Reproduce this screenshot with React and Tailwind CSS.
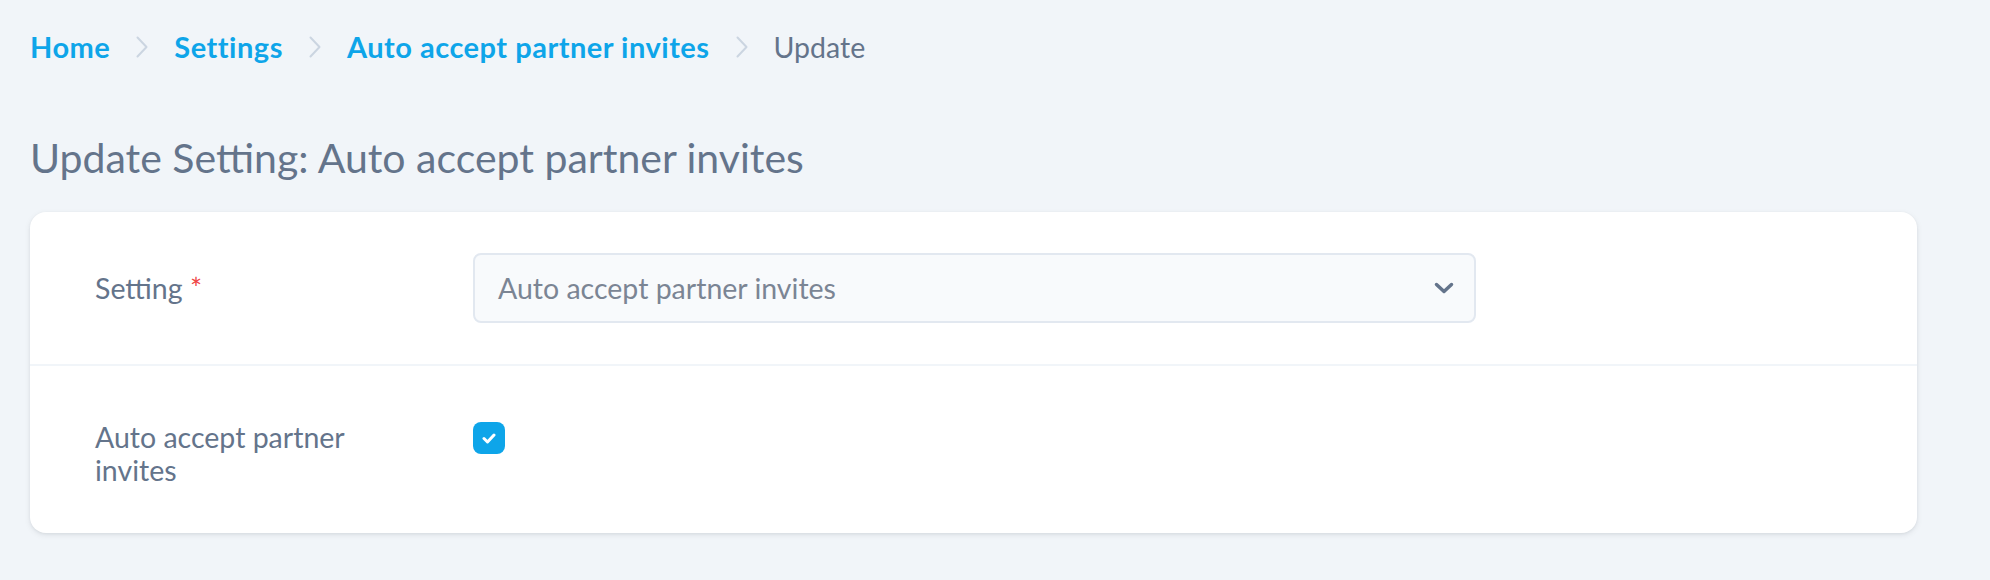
import { useState } from 'react'

const FONT = { fontFamily: 'Lato, "Noto Sans", sans-serif' }

function Chevron() {
  return (
    <svg width="12" height="22" viewBox="0 0 12 22" fill="none" className="mx-[26px] shrink-0">
      <path d="M1.5 1.5 L10.5 11 L1.5 20.5" stroke="#cbd5e1" strokeWidth="2" strokeLinecap="round" strokeLinejoin="round" />
    </svg>
  )
}

export default function App() {
  const [checked, setChecked] = useState(true)

  return (
    <div className="min-h-[580px] bg-[#f1f5f9] px-[30px] pt-[27px]" style={FONT}>
      {/* breadcrumbs */}
      <nav className="flex items-center h-[40px] text-[29px] leading-[40px] font-bold tracking-[0.5px]">
        <a className="text-[#0ea5e9]">Home</a>
        <Chevron />
        <a className="text-[#0ea5e9]">Settings</a>
        <Chevron />
        <a className="text-[#0ea5e9]">Auto accept partner invites</a>
        <Chevron />
        <span className="font-normal tracking-normal text-[28.5px] text-[#64748b]">Update</span>
      </nav>

      <h1 className="mt-[66px] text-[41px] leading-[49px] font-normal text-[#64748b]">
        Update Setting: Auto accept partner invites
      </h1>

      <div className="mt-[30px] w-[1887px] bg-white rounded-2xl shadow-[0_2px_6px_rgba(15,23,42,0.08),0_1px_3px_rgba(15,23,42,0.06)]">
        <div className="flex items-center pl-[65px] pt-[41px] pb-[41px] border-b-2 border-[#f1f5f9]">
          <div className="w-[378px] pr-[80px] text-[28.5px] leading-[33px] text-[#64748b]">
            Setting <span className="text-[#ef4444]">*</span>
          </div>
          <div className="relative w-[1003px] h-[70px] rounded-lg border-2 border-[#e2e8f0] bg-[#f8fafc] flex items-center pl-[23px]">
            <span className="text-[28.5px] text-[#7b8594]">Auto accept partner invites</span>
            <svg width="20" height="12" viewBox="0 0 20 12" fill="none" className="absolute right-[20px] top-[27px]">
              <path d="M2.5 2.5 L10 9.5 L17.5 2.5" stroke="#64748b" strokeWidth="3.5" strokeLinecap="round" strokeLinejoin="round" />
            </svg>
          </div>
        </div>

        <div className="flex items-start pl-[65px] pt-[41px] pb-[46px]">
          <div className="w-[378px] pr-[80px] mt-[14px] text-[28.5px] leading-[33px] text-[#64748b]">
            Auto accept partner invites
          </div>
          <button
            onClick={() => setChecked(!checked)}
            className={`mt-[15px] w-[32px] h-[32px] rounded-lg flex items-center justify-center ${
              checked ? 'bg-[#0ea5e9]' : 'bg-white border-2 border-[#cbd5e1]'
            }`}
          >
            {checked && (
              <svg width="14" height="11" viewBox="0 0 14 11" fill="none">
                <path d="M2 5.5 L5.5 9 L12 2" stroke="white" strokeWidth="3" strokeLinecap="round" strokeLinejoin="round" />
              </svg>
            )}
          </button>
        </div>
      </div>
    </div>
  )
}
